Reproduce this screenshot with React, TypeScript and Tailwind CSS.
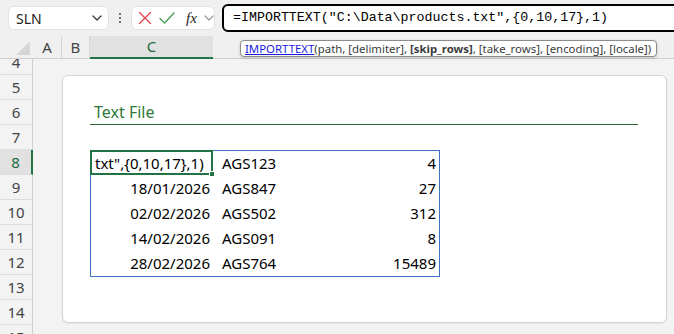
import React from 'react';

const rows = [
  { date: '', code: 'AGS123', qty: '4' },
  { date: '18/01/2026', code: 'AGS847', qty: '27' },
  { date: '02/02/2026', code: 'AGS502', qty: '312' },
  { date: '14/02/2026', code: 'AGS091', qty: '8' },
  { date: '28/02/2026', code: 'AGS764', qty: '15489' },
];

const rowNums = [5, 6, 7, 8, 9, 10, 11, 12, 13, 14];

function Chevron({ color }: { color: string }) {
  return (
    <svg width="10" height="6" viewBox="0 0 10 6" fill="none">
      <path d="M1 1l4 4 4-4" stroke={color} strokeWidth="1.2" strokeLinecap="round" strokeLinejoin="round" />
    </svg>
  );
}

export default function App() {
  return (
    <div className="w-[674px] h-[334px] overflow-hidden bg-[#f3f3f3] flex flex-col" style={{ fontFamily: '"Noto Sans", sans-serif' }}>
      {/* Toolbar: name box, commit buttons, formula bar */}
      <div className="h-[36px] shrink-0 flex items-center pl-[8px] bg-[#f0f0f0]">
        <div className="w-[101px] h-[24px] bg-white rounded-[6px] border border-[#e3e3e3] flex items-center justify-between pl-[7px] pr-[6px] text-[14px] text-[#222]">
          <span>SLN</span>
          <Chevron color="#333" />
        </div>
        <div className="w-[22px] flex flex-col items-center gap-[2px]">
          <span className="w-[2px] h-[2px] bg-[#444] rounded-full" />
          <span className="w-[2px] h-[2px] bg-[#444] rounded-full" />
          <span className="w-[2px] h-[2px] bg-[#444] rounded-full" />
        </div>
        <div className="w-[84px] h-[24px] bg-white rounded-[6px] border border-[#e3e3e3] flex items-center pl-[6px] gap-[7px]">
          <svg width="14" height="14" viewBox="0 0 14 14">
            <path d="M1.5 1.5l11 11M12.5 1.5l-11 11" stroke="#e2404a" strokeWidth="1.3" strokeLinecap="round" />
          </svg>
          <svg width="16" height="12" viewBox="0 0 16 12">
            <path d="M1 6.5l4.5 4.5L15 1" stroke="#3fa04f" strokeWidth="1.3" fill="none" strokeLinecap="round" strokeLinejoin="round" />
          </svg>
          <span className="italic text-[15px] text-[#222] leading-none ml-[4px]" style={{ fontFamily: '"Liberation Serif", serif' }}>
            fx
          </span>
          <Chevron color="#999" />
        </div>
        <div className="ml-[7px] h-[28px] flex-1 -mr-[10px] bg-white border-2 border-black rounded-[6px] flex items-center pl-[9px] text-[13.3px] text-black" style={{ fontFamily: '"Liberation Mono", monospace' }}>
          =IMPORTTEXT("C:\Data\products.txt",&#123;0,10,17&#125;,1)
        </div>
      </div>

      {/* Column headers */}
      <div className="relative h-[23px] shrink-0 flex border-b border-[#cfcfcf] bg-[#f0f0f0] text-[15px] text-[#444]">
        <div className="w-[33px] flex items-end justify-end pr-[3px] pb-[3px]">
          <svg width="14" height="14" viewBox="0 0 14 14">
            <path d="M14 0v14H0z" fill="#d6d6d6" />
          </svg>
        </div>
        <div className="w-[29px] flex items-center justify-center border-r border-[#d6d6d6]">A</div>
        <div className="w-[28px] flex items-center justify-center border-r border-[#d6d6d6]">B</div>
        <div className="w-[123px] flex items-center justify-center bg-[#e1e1e1] text-[#1e6b3c] border-b-2 border-[#217346] -mb-px">C</div>
        <div className="flex-1" />

        {/* Function tooltip */}
        <div className="absolute left-[240px] top-[4px] w-[417px] h-[17px] bg-white border border-[#8c8c8c] rounded-[4px] shadow-[0_1px_3px_rgba(0,0,0,0.2)] flex items-center pl-[4px] text-[11.4px] text-[#3b3b3b] whitespace-nowrap">
          <span>
            <span className="text-[#1a1adf] underline">IMPORTTEXT</span>(path, [delimiter], <span className="font-bold">[skip_rows]</span>, [take_rows], [encoding], [locale])
          </span>
        </div>
      </div>

      {/* Sheet body */}
      <div className="flex flex-1 min-h-0">
        {/* Row headers */}
        <div className="w-[33px] shrink-0 border-r border-[#cfcfcf] flex flex-col text-[15px] text-[#444]">
          <div className="h-[16px] shrink-0 overflow-hidden border-b border-[#dcdcdc]">
            <div className="h-[25px] -mt-[9px] flex items-center justify-center">4</div>
          </div>
          {rowNums.map((n) => (
            <div
              key={n}
              className={
                n === 8
                  ? 'h-[25px] shrink-0 flex items-center justify-center border-b border-[#dcdcdc] bg-[#e1e1e1] text-[#1e6b3c] -mr-px border-r-2 border-r-[#217346]'
                  : 'h-[25px] shrink-0 flex items-center justify-center border-b border-[#dcdcdc]'
              }
            >
              {n}
            </div>
          ))}
          <div className="h-[25px] shrink-0 flex items-center justify-center">15</div>
        </div>

        {/* Canvas with card */}
        <div className="flex-1 pt-[16px] pl-[29px]">
          <div className="w-[605px] h-[248px] bg-white border border-[#d4d4d4] rounded-[6px] shadow-[0_1px_2px_rgba(0,0,0,0.06)] pl-[27px] pt-[24px]">
            <div className="w-[548px] h-[25px] border-b border-[#2d6a2d] flex items-center pl-[4px] text-[16px] text-[#2f7a3a]">
              Text File
            </div>
            <div className="h-[25px]" />
            <div className="relative w-[350px] border border-[#3f72c4] text-[15px] text-black">
              {rows.map((r, i) => (
                <div key={i} className="h-[25px] flex items-center">
                  {i === 0 ? (
                    <div className="w-[122px] pl-[4px] whitespace-nowrap">txt",&#123;0,10,17&#125;,1)</div>
                  ) : (
                    <div className="w-[122px] text-right pr-[3px]">{r.date}</div>
                  )}
                  <div className="w-[90px] pl-[9px]">{r.code}</div>
                  <div className="flex-1 text-right pr-[3px]">{r.qty}</div>
                </div>
              ))}
              {/* Active cell */}
              <div className="absolute -left-px -top-px w-[123px] h-[25px] border-2 border-[#217346]">
                <span className="absolute -right-[4px] -bottom-[4px] w-[6px] h-[6px] bg-[#217346] border border-white" />
              </div>
            </div>
          </div>
        </div>
      </div>
    </div>
  );
}
